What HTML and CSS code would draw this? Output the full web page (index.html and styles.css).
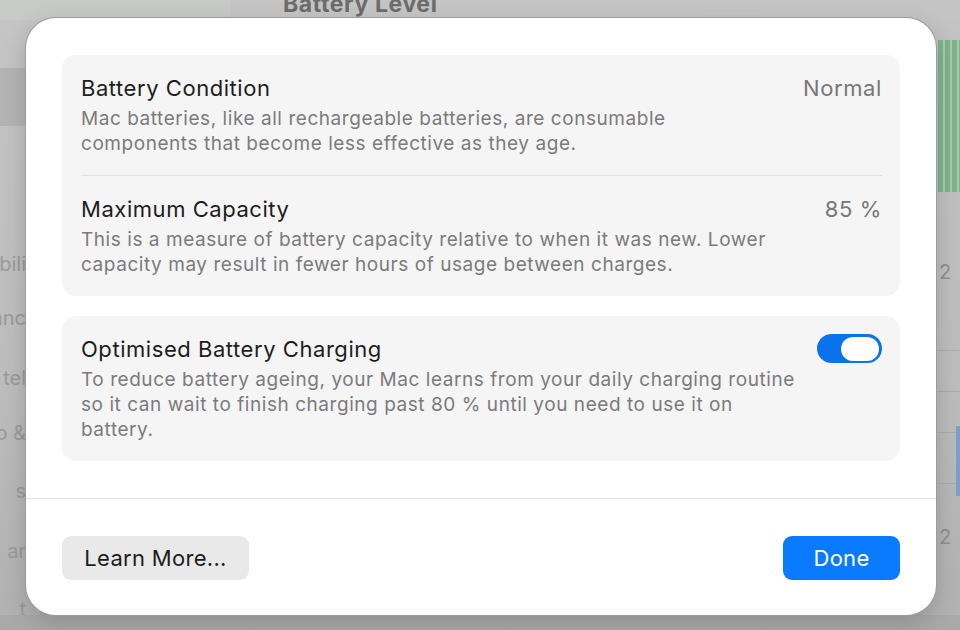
FILE: index.html
```html
<!DOCTYPE html>
<html lang="en">
<head>
<meta charset="utf-8">
<title>Battery Health</title>
<link rel="stylesheet" href="styles.css">
</head>
<body>
<div class="backdrop">
  <div class="bg-top">
    <span class="bg-heading">Battery Level</span>
  </div>
  <div class="bg-sidebar">
    <div class="bg-selected"></div>
    <span class="bg-item" style="top:232px">bili</span>
    <span class="bg-item" style="top:286px">anc</span>
    <span class="bg-item" style="top:346px">tel</span>
    <span class="bg-item" style="top:401px">o &amp;</span>
    <span class="bg-item" style="top:459px">s</span>
    <span class="bg-item" style="top:519px">ar</span>
    <span class="bg-item" style="top:577px">t</span>
  </div>
  <div class="bg-chart">
    <div class="bg-bars"></div>
    <span class="bg-num" style="top:240px">2</span>
    <div class="bg-line" style="top:330px"></div>
    <div class="bg-line" style="top:371px"></div>
    <div class="bg-line" style="top:412px"></div>
    <div class="bg-line" style="top:463px"></div>
    <div class="bg-blue"></div>
    <span class="bg-num" style="top:505px">2</span>
  </div>
</div>

<div class="dialog">
  <div class="dialog-body">
    <section class="card">
      <div class="row">
        <div class="row-text">
          <div class="row-title">Battery Condition</div>
          <div class="row-desc">Mac batteries, like all rechargeable batteries, are consumable<br>components that become less effective as they age.</div>
        </div>
        <div class="row-value">Normal</div>
      </div>
      <div class="row row-divided">
        <div class="row-text">
          <div class="row-title">Maximum Capacity</div>
          <div class="row-desc">This is a measure of battery capacity relative to when it was new. Lower<br>capacity may result in fewer hours of usage between charges.</div>
        </div>
        <div class="row-value">85 %</div>
      </div>
    </section>
    <section class="card">
      <div class="row">
        <div class="row-text">
          <div class="row-title">Optimised Battery Charging</div>
          <div class="row-desc">To reduce battery ageing, your Mac learns from your daily charging routine<br>so it can wait to finish charging past 80 % until you need to use it on<br>battery.</div>
        </div>
        <div class="toggle"><span class="knob"></span></div>
      </div>
    </section>
  </div>
  <div class="dialog-footer">
    <button class="btn btn-secondary">Learn More...</button>
    <button class="btn btn-primary">Done</button>
  </div>
</div>
</body>
</html>
```
FILE: styles.css
```css
* { box-sizing: border-box; }
html, body {
  margin: 0;
  width: 960px;
  height: 630px;
  overflow: hidden;
}
body {
  position: relative;
  font-family: "Inter", "Liberation Sans", sans-serif;
  background: #b9b9b9;
}

/* ---------- blurred window behind the sheet ---------- */
.backdrop {
  position: absolute;
  inset: 0;
  background: linear-gradient(#c3c3c3, #b6b6b6 75%, #a9a9a9);
}
.bg-top {
  position: absolute;
  left: 0; top: 0;
  width: 960px; height: 40px;
  background: linear-gradient(90deg, #c8cac8 0, #c8cac8 230px, #c5c5c5 231px, #c4c4c4 100%);
  overflow: hidden;
}
.bg-heading {
  position: absolute;
  left: 283px;
  top: -10px;
  font-family: "Inter", "Liberation Sans", sans-serif;
  font-weight: 700;
  font-size: 23px;
  letter-spacing: 0.6px;
  color: #6c6c6c;
}
.bg-sidebar {
  position: absolute;
  left: 0; top: 20px;
  width: 40px; height: 595px;
  background: linear-gradient(#c4c5c4, #bdbdbd 60%, #b2b2b2);
  overflow: hidden;
}
.bg-selected {
  position: absolute;
  left: 0; top: 48px;
  width: 40px; height: 58px;
  background: #b3b4b3;
}
.bg-item {
  position: absolute;
  right: 14px;
  font-size: 20px;
  color: #9a9a9a;
  white-space: nowrap;
}
.bg-chart {
  position: absolute;
  left: 920px; top: 20px;
  width: 40px; height: 595px;
  background: linear-gradient(#c3c3c3, #bdbdbd 60%, #b2b2b2);
}
.bg-bars {
  position: absolute;
  left: 18px; top: 20px;
  width: 22px; height: 152px;
  background: repeating-linear-gradient(90deg, #7fb48b 0, #7fb48b 5px, #a8cbb0 5px, #a8cbb0 7px);
}
.bg-line {
  position: absolute;
  left: 16px; width: 24px; height: 1px;
  background: #acacac;
}
.bg-blue {
  position: absolute;
  left: 36px; top: 406px;
  width: 6px; height: 70px;
  background: #7f9fcb;
}
.bg-num {
  position: absolute;
  left: 19px;
  font-size: 20px;
  color: #8f8f8f;
}

/* ---------- sheet ---------- */
.dialog {
  position: absolute;
  left: 26px; top: 18px;
  width: 910px; height: 597px;
  background: #ffffff;
  border-radius: 30px;
  box-shadow: 0 0 0 1px #9c9c9c, 0 8px 24px rgba(0,0,0,0.18);
  display: flex;
  flex-direction: column;
  color: #1e1e1e;
}
.dialog-body {
  padding: 37px 36px 0 36px;
  display: flex;
  flex-direction: column;
  gap: 20px;
}
.card {
  background: #f5f5f5;
  border-radius: 14px;
  padding: 0 18px 0 19px;
}
.row {
  display: flex;
  align-items: flex-start;
  justify-content: space-between;
  padding: 20px 0 19px;
}
.row-divided {
  border-top: 1px solid #e2e2e2;
}
.row-title {
  font-size: 22px;
  line-height: 26px;
  color: #1d1d1d;
  letter-spacing: 0.55px;
}
.row-desc {
  margin-top: 5px;
  font-size: 19px;
  line-height: 25px;
  color: #7b7b7b;
  letter-spacing: 0.55px;
}
.row-value {
  font-size: 22px;
  line-height: 26px;
  color: #777777;
  letter-spacing: 0.6px;
}
.toggle {
  margin-top: -2px;
  width: 65px;
  height: 29px;
  border-radius: 15px;
  background: #0b72ee;
  display: flex;
  align-items: center;
  justify-content: flex-end;
  padding: 0 3px;
  flex: none;
}
.knob {
  width: 38px;
  height: 24px;
  border-radius: 12px;
  background: #ffffff;
}

.dialog-footer {
  margin-top: 37px;
  border-top: 1px solid #e3e3e3;
  padding: 37px 36px 0 36px;
  display: flex;
  justify-content: space-between;
}
.btn {
  height: 44px;
  border: none;
  border-radius: 9px;
  font-family: "Inter", "Liberation Sans", sans-serif;
  font-size: 22px;
  letter-spacing: 0.3px;
  padding: 0;
  cursor: pointer;
}
.btn-secondary {
  width: 187px;
  background: #e9e9e9;
  color: #1d1d1d;
}
.btn-primary {
  width: 117px;
  background: #0a7bff;
  color: #ffffff;
}
```
